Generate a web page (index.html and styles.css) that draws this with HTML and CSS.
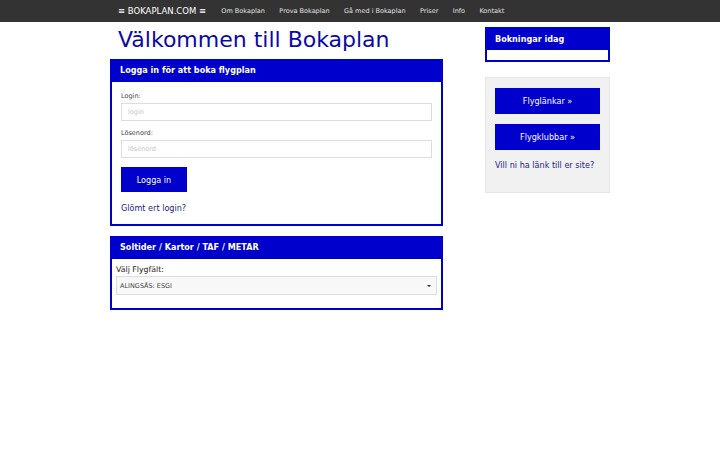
FILE: index.html
```html
<!DOCTYPE html>
<html lang="sv">
<head>
    <meta charset="UTF-8">
    <meta name="viewport" content="width=device-width, initial-scale=1.0">
    <title>Bokaplan</title>
    <link rel="stylesheet" href="styles.css">
</head>
<body>
    <nav class="navbar">
        <div class="nav-inner">
            <a class="brand" href="#">&#8801; BOKAPLAN.COM &#8801;</a>
            <ul class="nav-links">
                <li><a href="#">Om Bokaplan</a></li>
                <li><a href="#">Prova Bokaplan</a></li>
                <li><a href="#">Gå med i Bokaplan</a></li>
                <li><a href="#">Priser</a></li>
                <li><a href="#">Info</a></li>
                <li><a href="#">Kontakt</a></li>
            </ul>
        </div>
    </nav>

    <div class="container">
        <div class="main-col">
            <h1>Välkommen till Bokaplan</h1>

            <div class="panel">
                <div class="panel-heading">Logga in för att boka flygplan</div>
                <div class="panel-body login-body">
                    <form>
                        <label for="login">Login:</label>
                        <input type="text" id="login" class="form-input" placeholder="login">
                        <label for="pw">Lösenord:</label>
                        <input type="password" id="pw" class="form-input" placeholder="lösenord">
                        <button type="submit" class="btn">Logga in</button>
                    </form>
                    <a class="link" href="#">Glömt ert login?</a>
                </div>
            </div>

            <div class="panel">
                <div class="panel-heading">Soltider / Kartor / TAF / METAR</div>
                <div class="panel-body field-body">
                    <label class="field-label" for="field">Välj Flygfält:</label>
                    <div class="select-box" id="field">
                        <span>ALINGSÅS: ESGI</span>
                        <span class="caret"></span>
                    </div>
                </div>
            </div>
        </div>

        <aside class="side-col">
            <div class="panel today">
                <div class="panel-heading">Bokningar idag</div>
                <div class="today-body"></div>
            </div>

            <div class="side-box">
                <a class="btn side-btn" href="#">Flyglänkar &raquo;</a>
                <a class="btn side-btn" href="#">Flygklubbar &raquo;</a>
                <a class="link" href="#">Vill ni ha länk till er site?</a>
            </div>
        </aside>
    </div>
</body>
</html>
```

FILE: styles.css
```css
body {
    font-family: "DejaVu Sans", Verdana, sans-serif;
    margin: 0;
    padding: 0;
    background-color: #ffffff;
    color: #333333;
}

a {
    text-decoration: none;
}

/* top bar */
.navbar {
    background-color: #333333;
    height: 22px;
}

.nav-inner {
    width: 500px;
    margin: 0 auto;
    display: flex;
    align-items: center;
    height: 22px;
    padding-left: 8px;
    box-sizing: border-box;
}

.brand {
    color: #ffffff;
    font-size: 8.5px;
    margin-right: 8px;
}

.nav-links {
    list-style: none;
    margin: 0;
    padding: 0;
    display: flex;
}

.nav-links a {
    display: block;
    color: #e0e0e0;
    font-size: 6.5px;
    padding: 0 7.2px;
}

/* page */
.container {
    width: 500px;
    margin: 0 auto;
    display: flex;
    justify-content: space-between;
}

.main-col {
    width: 333px;
}

.side-col {
    width: 125px;
    padding-top: 5px;
}

h1 {
    font-size: 22px;
    font-weight: normal;
    color: #0a0aa8;
    margin: 5px 0 6px 8px;
    line-height: 26px;
}

.panel {
    border: 2px solid #0000cc;
    background-color: #ffffff;
    margin-bottom: 10px;
}

.panel-heading {
    background-color: #0000cc;
    color: #ffffff;
    font-weight: bold;
    font-size: 8.1px;
    height: 21px;
    line-height: 18px;
    padding-left: 8px;
}

.login-body {
    padding: 10px 9px 11px 9px;
}

.login-body label {
    display: block;
    font-size: 6.5px;
    line-height: 8px;
    color: #444444;
    margin: 0 0 3px 0;
}

.form-input {
    display: block;
    width: 100%;
    box-sizing: border-box;
    height: 18px;
    border: 1px solid #dddddd;
    font-family: inherit;
    font-size: 6.5px;
    padding: 0 6px;
    margin: 0 0 8px 0;
}

.form-input::placeholder {
    color: #c4c4c4;
}

.btn {
    display: flex;
    align-items: center;
    justify-content: center;
    background-color: #0000cc;
    color: #ffffff;
    border: none;
    font-family: inherit;
    font-size: 8.1px;
}

.login-body .btn {
    width: 66px;
    height: 25px;
    margin-top: 9px;
    margin-bottom: 11px;
}

.link {
    display: block;
    color: #22228a;
    font-size: 8.1px;
    line-height: 10px;
}

.field-body {
    padding: 6px 4px 13px 4px;
}

.field-label {
    display: block;
    font-size: 7.8px;
    line-height: 9px;
    color: #222222;
    margin-bottom: 2px;
}

.select-box {
    display: flex;
    justify-content: space-between;
    align-items: center;
    box-sizing: border-box;
    height: 19px;
    border: 1px solid #dddddd;
    background-color: #f8f8f8;
    font-size: 6.5px;
    color: #444444;
    padding: 0 5px 0 3px;
}

.caret {
    width: 0;
    height: 0;
    border-left: 2px solid transparent;
    border-right: 2px solid transparent;
    border-top: 2px solid #333333;
}

/* sidebar */
.today .panel-heading {
    height: 21px;
    line-height: 20px;
}

.today-body {
    height: 10px;
}

.today {
    margin-bottom: 15px;
}

.side-box {
    background-color: #f1f1f1;
    border: 1px solid #e6e6e6;
    padding: 10px 9px 22px 9px;
}

.side-btn {
    height: 26px;
    margin-bottom: 10px;
}

.side-box .link {
    margin-top: 10px;
}
```
